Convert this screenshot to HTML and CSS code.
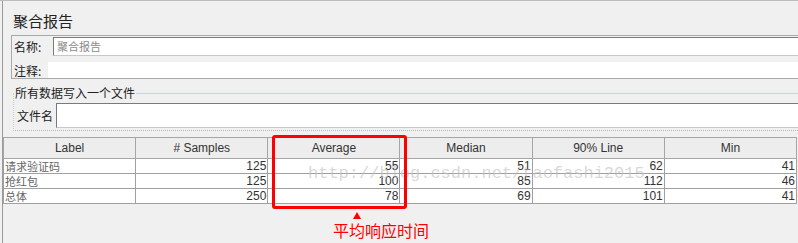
FILE: index.html
```html
<!DOCTYPE html>
<html lang="zh-CN">
<head>
    <meta charset="UTF-8">
    <meta name="viewport" content="width=device-width, initial-scale=1.0">
    <title>聚合报告</title>
    <link rel="stylesheet" href="styles.css">
</head>
<body>
    <div class="window">
        <div class="frame">
            <h1 class="title">聚合报告</h1>

            <div class="namebox">
                <div class="row name-row">
                    <span class="lbl">名称:</span>
                    <div class="field">聚合报告</div>
                </div>
                <div class="row note-row">
                    <span class="lbl">注释:</span>
                    <div class="note"></div>
                </div>
            </div>

            <fieldset class="group">
                <legend>所有数据写入一个文件</legend>
                <div class="row file-row">
                    <span class="lbl">文件名</span>
                    <div class="field"></div>
                </div>
            </fieldset>

            <div class="results">
                <table>
                    <thead>
                        <tr>
                            <th>Label</th>
                            <th># Samples</th>
                            <th>Average</th>
                            <th>Median</th>
                            <th>90% Line</th>
                            <th>Min</th>
                        </tr>
                    </thead>
                    <tbody>
                        <tr>
                            <td class="name">请求验证码</td>
                            <td>125</td>
                            <td>55</td>
                            <td>51</td>
                            <td>62</td>
                            <td>41</td>
                        </tr>
                        <tr>
                            <td class="name">抢红包</td>
                            <td>125</td>
                            <td>100</td>
                            <td>85</td>
                            <td>112</td>
                            <td>46</td>
                        </tr>
                        <tr>
                            <td class="name">总体</td>
                            <td>250</td>
                            <td>78</td>
                            <td>69</td>
                            <td>101</td>
                            <td>41</td>
                        </tr>
                    </tbody>
                </table>

                <!-- annotations drawn over the screenshot -->
                <div class="watermark">http://blog.csdn.net/taofashi2015</div>
                <div class="mark"></div>
                <div class="arrow"></div>
                <div class="callout">平均响应时间</div>
            </div>
        </div>
    </div>
</body>
</html>
```

FILE: styles.css
```css
body {
    margin: 0;
    background-color: #f0f0f0;
    font-family: "Liberation Sans", "Noto Sans CJK SC", sans-serif;
    color: #333;
}
.window {
    border-top: 1px solid #bdbdbd;
    height: 242px;
    overflow: hidden;
}
.frame {
    margin-left: 2px;
    border-left: 1px solid #9a9a9a;
    height: 100%;
}
.title {
    margin: 0;
    padding: 10px 0 4px 10px;
    font-family: "Noto Sans CJK SC", sans-serif;
    font-size: 15px;
    line-height: 20px;
    font-weight: normal;
    color: #222;
}
.row {
    display: flex;
    align-items: center;
}
.lbl {
    font-family: "Noto Sans CJK SC", sans-serif;
    font-size: 12px;
    color: #222;
    box-sizing: border-box;
    padding-left: 2px;
    flex: none;
}
.field {
    flex: 1;
    box-sizing: border-box;
    background-color: #fff;
    border-top: 1px solid #7a7a7a;
    border-left: 1px solid #7a7a7a;
    border-bottom: 1px solid #c8c8c8;
    font-family: "Noto Sans CJK SC", sans-serif;
    font-size: 11px;
    color: #8a8a8a;
    padding-left: 3px;
}

/* name / comment box */
.namebox {
    margin-left: 8px;
    border: 1px solid #a9a9a9;
    border-right: none;
    padding-top: 1px;
}
.name-row .lbl {
    width: 41px;
}
.name-row .field {
    height: 19px;
    line-height: 17px;
}
.note-row {
    margin-top: 6px;
    height: 16px;
}
.note-row .lbl {
    width: 36px;
}
.note {
    flex: 1;
    height: 16px;
    background-color: #fff;
}

/* file group */
.group {
    margin: 7px 0 0 10px;
    padding: 3px 0 2px 3px;
    border: none;
    border-top: 1px solid #c4d4e4;
    border-left: 1px dotted #c4cdd6;
    border-bottom: 1px dotted #b8b8b8;
}
.group legend {
    padding: 0 1px;
    margin-left: -3px;
    font-family: "Noto Sans CJK SC", sans-serif;
    font-size: 12px;
    line-height: 14px;
    color: #222;
}
.file-row .lbl {
    width: 39px;
    padding-left: 0;
}
.file-row .field {
    height: 25px;
}

/* results table */
.results {
    position: relative;
    margin-top: 6px;
}
table {
    width: 794px;
    border-collapse: collapse;
    table-layout: fixed;
}
th {
    height: 20px;
    padding: 0;
    border: 1px solid #a6a6a6;
    background-color: #ededed;
    font-size: 12px;
    font-weight: normal;
    color: #333;
}
td {
    height: 14px;
    padding: 0 1px;
    border: 1px solid #a0a0a0;
    background-color: #fff;
    font-size: 12px;
    line-height: 14px;
    text-align: right;
    color: #333;
}
td.name {
    text-align: left;
    font-family: "Noto Sans CJK SC", sans-serif;
    font-size: 11px;
    color: #666;
}
.watermark {
    position: absolute;
    left: 305px;
    top: 27px;
    font-family: "Liberation Mono", monospace;
    font-size: 17px;
    line-height: 20px;
    color: rgba(190, 190, 190, 0.6);
    white-space: nowrap;
}
.mark {
    position: absolute;
    left: 269px;
    top: -2px;
    width: 135px;
    height: 74px;
    box-sizing: border-box;
    border: 3px solid #f00;
    border-radius: 3px;
}
.arrow {
    position: absolute;
    left: 350px;
    top: 75px;
    width: 0;
    height: 0;
    border-left: 4px solid transparent;
    border-right: 4px solid transparent;
    border-bottom: 7px solid #f00;
}
.callout {
    position: absolute;
    left: 330px;
    top: 84px;
    font-family: "Noto Sans CJK SC", sans-serif;
    font-size: 16px;
    line-height: 18px;
    color: #f00;
    white-space: nowrap;
}
```
